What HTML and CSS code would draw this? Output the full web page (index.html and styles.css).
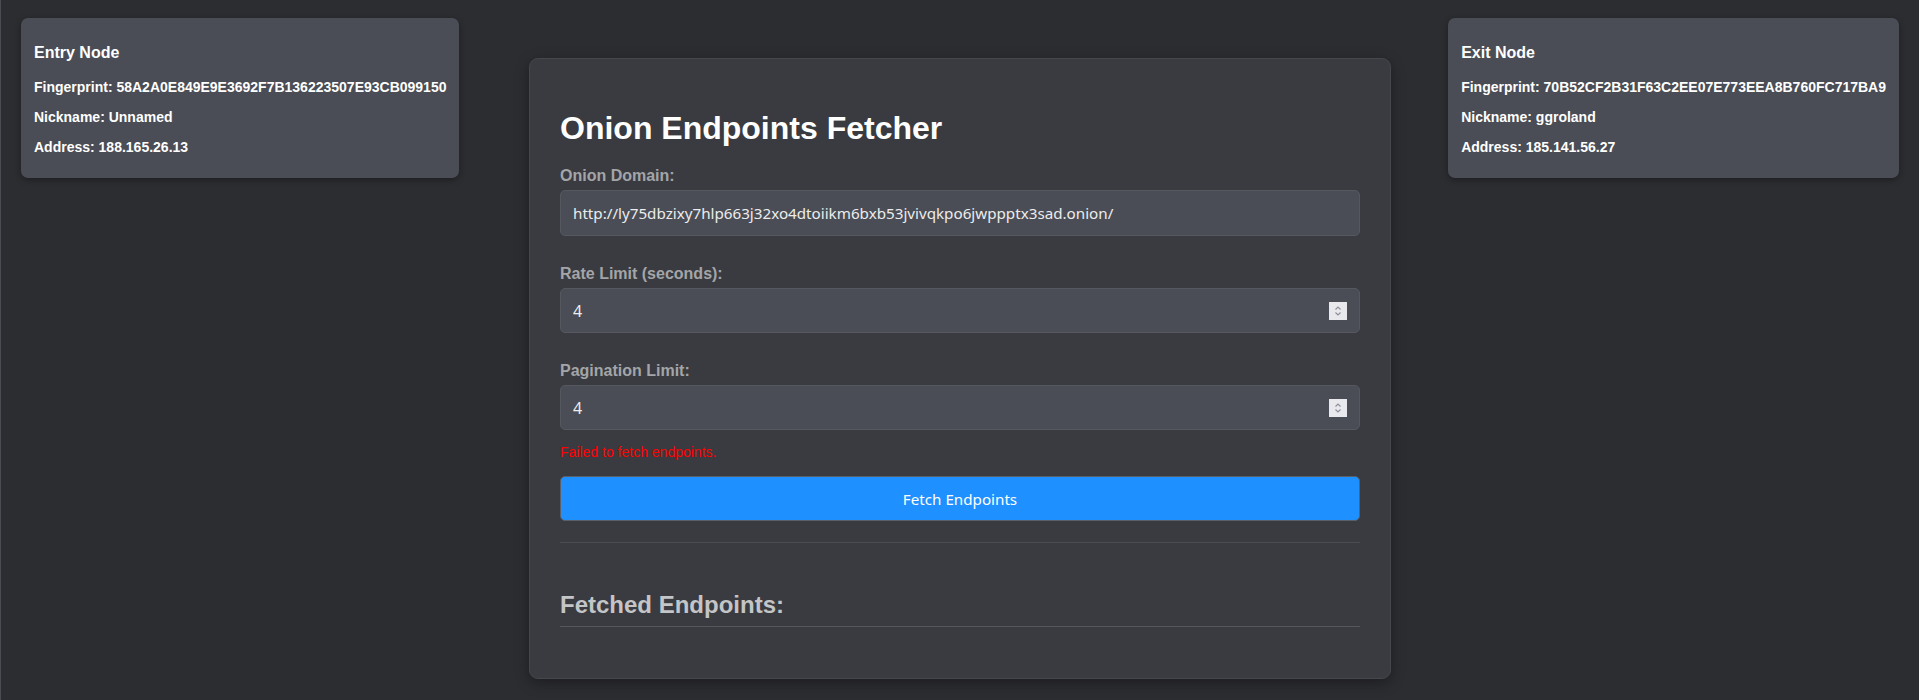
FILE: index.html
```html
<!DOCTYPE html>
<html lang="en">
<head>
<meta charset="utf-8">
<title>Onion Endpoints Fetcher</title>
<link rel="stylesheet" href="styles.css">
</head>
<body>
<div class="page">
  <div class="node-card node-entry">
    <h3>Entry Node</h3>
    <p>Fingerprint: 58A2A0E849E9E3692F7B136223507E93CB099150</p>
    <p>Nickname: Unnamed</p>
    <p>Address: 188.165.26.13</p>
  </div>

  <main class="container">
    <h1>Onion Endpoints Fetcher</h1>
    <div class="field">
      <label for="domain">Onion Domain:</label>
      <div class="input-box">
        <input id="domain" type="text" value="http://ly75dbzixy7hlp663j32xo4dtoiikm6bxb53jvivqkpo6jwppptx3sad.onion/">
      </div>
    </div>
    <div class="field">
      <label for="rate">Rate Limit (seconds):</label>
      <div class="input-box number-box">
        <input id="rate" type="number" value="4">
        <svg class="spinner" width="18" height="18" viewBox="0 0 18 18" aria-hidden="true">
          <rect width="18" height="18" fill="#e9e9ed"/>
          <path d="M6.5 7.5 L9 5 L11.5 7.5" fill="none" stroke="#8f8f9d" stroke-width="1.2"/>
          <path d="M6.5 10.5 L9 13 L11.5 10.5" fill="none" stroke="#8f8f9d" stroke-width="1.2"/>
        </svg>
      </div>
    </div>
    <div class="field">
      <label for="pages">Pagination Limit:</label>
      <div class="input-box number-box">
        <input id="pages" type="number" value="4">
        <svg class="spinner" width="18" height="18" viewBox="0 0 18 18" aria-hidden="true">
          <rect width="18" height="18" fill="#e9e9ed"/>
          <path d="M6.5 7.5 L9 5 L11.5 7.5" fill="none" stroke="#8f8f9d" stroke-width="1.2"/>
          <path d="M6.5 10.5 L9 13 L11.5 10.5" fill="none" stroke="#8f8f9d" stroke-width="1.2"/>
        </svg>
      </div>
    </div>
    <p class="error">Failed to fetch endpoints.</p>
    <button class="fetch-btn" type="button">Fetch Endpoints</button>
    <hr class="divider">
    <h2>Fetched Endpoints:</h2>
  </main>

  <div class="node-card node-exit">
    <h3>Exit Node</h3>
    <p>Fingerprint: 70B52CF2B31F63C2EE07E773EEA8B760FC717BA9</p>
    <p>Nickname: ggroland</p>
    <p>Address: 185.141.56.27</p>
  </div>
</div>
</body>
</html>
```
FILE: styles.css
```css
html, body {
  margin: 0;
  padding: 0;
  background: #2c2d31;
}

body {
  min-height: 700px;
  border-left: 1px solid #4a4b50;
  font-family: "Liberation Sans", Arial, sans-serif;
  color: #ffffff;
}

.page {
  display: grid;
  grid-template-columns: 1fr 862px 1fr;
  align-items: start;
  padding: 18px 20px 0 20px;
}

.node-card {
  background: #4a4d55;
  border-radius: 7px;
  padding: 9px 13px 9px 13px;
  box-shadow: 0 2px 6px rgba(0, 0, 0, 0.35);
  font-weight: bold;
  width: max-content;
}

.node-entry { justify-self: start; }
.node-exit { justify-self: end; }

.node-card h3 {
  font-size: 16px;
  margin: 17px 0 17px;
}

.node-card p {
  font-size: 14px;
  margin: 14px 0;
}

.container {
  margin-top: 40px;
  background: #393b40;
  border: 1px solid #45474c;
  border-radius: 9px;
  padding: 30px;
  box-shadow: 0 4px 14px rgba(0, 0, 0, 0.35);
}

.container h1 {
  font-size: 32px;
  margin: 21px 0 20px;
  color: #ffffff;
}

.field + .field {
  margin-top: 29px;
}

.field label {
  display: block;
  font-size: 16px;
  font-weight: bold;
  color: #a4a5a8;
  margin-bottom: 5px;
}

.input-box {
  display: flex;
  align-items: center;
  box-sizing: border-box;
  height: 46px;
  padding: 0 12px;
  background: #4a4d55;
  border: 1px solid #55585f;
  border-radius: 5px;
}

.number-box {
  height: 45px;
}

.input-box input {
  flex: 1;
  min-width: 0;
  padding: 0;
  margin: 0;
  background: transparent;
  border: 0;
  color: #ececec;
  font-family: "Noto Sans", sans-serif;
  font-size: 15.2px;
  outline: none;
}

.number-box input {
  font-size: 16px;
  -moz-appearance: textfield;
}

.number-box input::-webkit-inner-spin-button,
.number-box input::-webkit-outer-spin-button {
  -webkit-appearance: none;
  margin: 0;
}

.spinner {
  flex: none;
  display: block;
}

.error {
  color: #ff0000;
  font-size: 14px;
  margin: 14px 0 16px;
}

.fetch-btn {
  display: block;
  width: 100%;
  height: 45px;
  background: #1e90ff;
  border: 1px solid #5a6068;
  border-radius: 5px;
  color: #ffffff;
  font-family: "Noto Sans", sans-serif;
  font-size: 15.2px;
}

.divider {
  border: 0;
  border-top: 1px solid #4a4c52;
  margin: 21px 0 0;
}

.container h2 {
  font-size: 24px;
  color: #c4c5c7;
  margin: 48px 0 21px;
  padding-bottom: 7px;
  border-bottom: 1px solid #55575c;
}
```
